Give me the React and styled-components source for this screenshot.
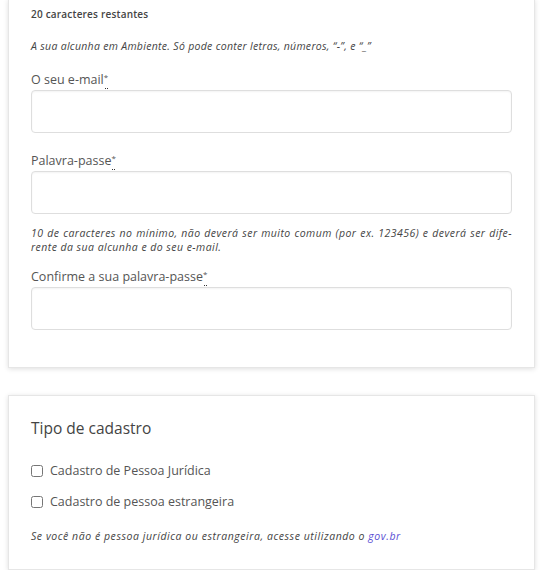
import React from "react";
import styled, { createGlobalStyle } from "styled-components";

const Global = createGlobalStyle`
  html, body { margin: 0; padding: 0; background: #fff; }
  body { font-family: "Open Sans", "Noto Sans", "Liberation Sans", sans-serif; color: #555; overflow: hidden; }
`;

const Page = styled.div`
  padding: 0 23px 0 8px;
  display: flex;
  flex-direction: column;
  gap: 27px;
`;

const Card = styled.section`
  background: #fff;
  border: 1px solid #e6e6e6;
  box-shadow: 0 1px 5px rgba(0, 0, 0, 0.13);
  padding: ${(p) => p.$pad};
  margin-top: ${(p) => p.$top || "0"};
  display: flex;
  flex-direction: column;
`;

const Counter = styled.div`
  font-size: 10px;
  font-weight: 600;
  color: #444;
  line-height: 14px;
  letter-spacing: 0.2px;
`;

const Hint = styled.p`
  margin: ${(p) => p.$m || "0"};
  font-size: 10.5px;
  font-style: italic;
  line-height: 14px;
  color: #444;
  letter-spacing: ${(p) => p.$ls || "0"};
`;

const JustLine = styled.span`
  display: block;
  text-align: justify;
  text-align-last: justify;
`;

const Label = styled.label`
  display: block;
  font-size: 12.5px;
  line-height: 16px;
  color: #555;
  margin-top: ${(p) => p.$mt};
  margin-bottom: 2px;
`;

const Star = styled.span`
  display: inline-block;
  position: relative;
  font-size: 8px;
  line-height: 10px;
  vertical-align: top;
  &::after {
    content: "";
    position: absolute;
    left: 1px;
    top: 16px;
    width: 1px;
    height: 1px;
    background: #333;
    box-shadow: 2px 0 0 #333;
  }
`;

const Input = styled.input`
  display: block;
  box-sizing: border-box;
  width: 481px;
  height: 43px;
  border: 1px solid #dedede;
  border-radius: 4px;
  box-shadow: inset 0 1px 2px rgba(0, 0, 0, 0.05);
  background: #fff;
  outline: none;
`;

const Title = styled.h2`
  margin: 0 0 25px;
  font-size: 15.5px;
  font-weight: 400;
  color: #444;
  line-height: 20px;
`;

const CheckRow = styled.label`
  display: flex;
  align-items: center;
  gap: 7px;
  font-size: 12.5px;
  color: #555;
  line-height: 16px;
  margin-bottom: 15px;
  input { margin: 0; width: 12px; height: 12px; }
`;

const Link = styled.a`
  color: #5a4fd4;
  text-decoration: none;
`;

export default function App() {
  return (
    <>
      <Global />
      <Page>
        <Card $pad="7px 22px 37px" $top="-1px">
          <Counter>20 caracteres restantes</Counter>
          <Hint $m="18px 0 0" $ls="0.3px">
            A sua alcunha em Ambiente. Só pode conter letras, números, “-”, e “_”
          </Hint>
          <Label $mt="19px">
            O seu e-mail<Star>*</Star>
          </Label>
          <Input type="email" />
          <Label $mt="20px">
            Palavra-passe<Star>*</Star>
          </Label>
          <Input type="password" />
          <Hint $m="12px 0 0" $ls="0.45px">
            <JustLine>
              10 de caracteres no mínimo, não deverá ser muito comum (por ex. 123456) e deverá ser dife-
            </JustLine>
            rente da sua alcunha e do seu e-mail.
          </Hint>
          <Label $mt="15px">
            Confirme a sua palavra-passe<Star>*</Star>
          </Label>
          <Input type="password" />
        </Card>
        <Card $pad="22px 22px 26px">
          <Title>Tipo de cadastro</Title>
          <CheckRow>
            <input type="checkbox" />
            Cadastro de Pessoa Jurídica
          </CheckRow>
          <CheckRow>
            <input type="checkbox" />
            Cadastro de pessoa estrangeira
          </CheckRow>
          <Hint $m="4px 0 0" $ls="0.55px">
            Se você não é pessoa jurídica ou estrangeira, acesse utilizando o{" "}
            <Link href="#">gov.br</Link>
          </Hint>
        </Card>
      </Page>
    </>
  );
}
